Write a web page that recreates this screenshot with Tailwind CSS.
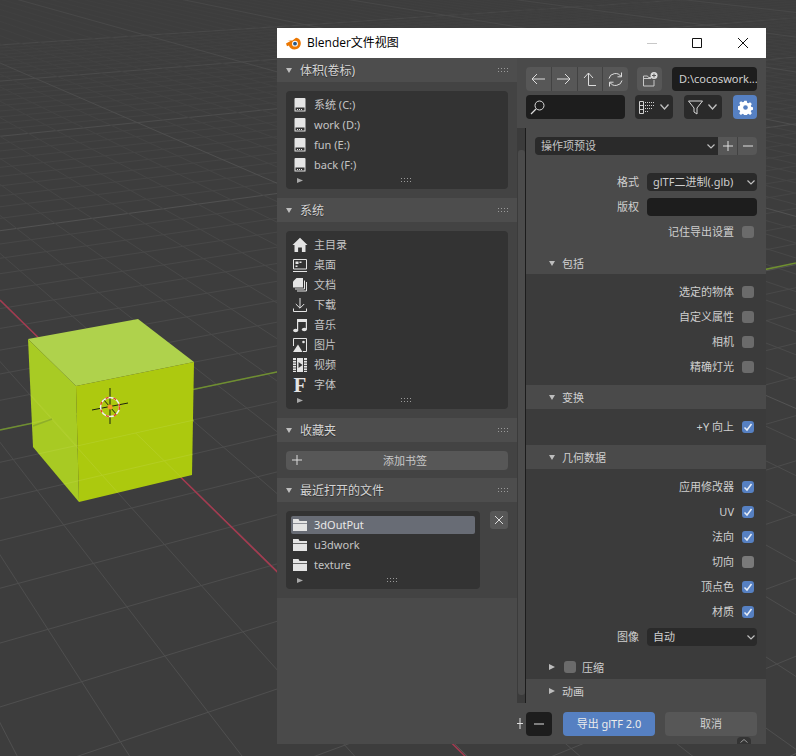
<!DOCTYPE html>
<html lang="zh">
<head>
<meta charset="UTF-8" />
<title>Blender文件视图</title>
<script src="https://cdn.jsdelivr.net/npm/@tailwindcss/browser@4"></script>
</head>
<body class="bg-[#3d3d3d] overflow-hidden font-['Noto_Sans','Noto_Sans_CJK_SC',sans-serif] text-[11px] leading-[18px] text-[#d0d0d0]">

<!-- icon symbols -->
<svg class="hidden">
  <symbol id="grip" viewBox="0 0 11 5"><g fill="#9a9a9a"><rect x="0" y="0" width="1" height="1"/><rect x="3" y="0" width="1" height="1"/><rect x="6" y="0" width="1" height="1"/><rect x="9" y="0" width="1" height="1"/><rect x="0" y="3" width="1" height="1"/><rect x="3" y="3" width="1" height="1"/><rect x="6" y="3" width="1" height="1"/><rect x="9" y="3" width="1" height="1"/></g></symbol>
  <symbol id="drive" viewBox="0 0 16 16"><path d="M3.500 1h9a1 1 0 0 1 1 1v12.500h-11V2a1 1 0 0 1 1-1z" fill="#e4e4e4"/><rect x="3.500" y="10.500" width="9" height="3" fill="#333"/><path d="M5 12h1v1H5zM7 12h1v1H7zM9 12h1v1H9z" fill="#e4e4e4"/></symbol>
  <symbol id="folder" viewBox="0 0 16 16"><path d="M1 2h5.500l1 2H15v2H1z" fill="#e4e4e4"/><path d="M1 6.700h14v7.300H1z" fill="#e4e4e4"/></symbol>
  <symbol id="home" viewBox="0 0 16 16"><path d="M8 .8 15.500 8H13.500v7h-3.600v-4.600H6.100V15H2.500V8H.5z" fill="#e4e4e4"/></symbol>
  <symbol id="desktop" viewBox="0 0 16 16"><path d="M1.500 2.500h13v9.500h-13z" fill="none" stroke="#e4e4e4"/><path d="M1 14h14v1H1z" fill="#e4e4e4"/><path d="M3.500 4.500h3v2.500h-3zM7.500 4.500h2v1.500h-2zM3.500 8.500h2v1.500h-2z" fill="#e4e4e4"/></symbol>
  <symbol id="docs" viewBox="0 0 16 16"><path d="M4.500 1H11v9.500H1V4.500z" fill="#e4e4e4"/><path d="M12.500 3.500v8.500H3M14.500 5v9H5" fill="none" stroke="#e4e4e4"/></symbol>
  <symbol id="download" viewBox="0 0 16 16"><path d="M8 1v10M3.800 7 8 11.200 12.200 7M1.500 11.500v3h13v-3" fill="none" stroke="#e4e4e4"/></symbol>
  <symbol id="music" viewBox="0 0 16 16"><path d="M5 2h10v10.500h-1.200V5H6.200v8.500H5z" fill="#e4e4e4"/><ellipse cx="3.600" cy="13.500" rx="2.500" ry="1.800" fill="#e4e4e4"/><ellipse cx="12.300" cy="12.500" rx="2.500" ry="1.800" fill="#e4e4e4"/></symbol>
  <symbol id="image" viewBox="0 0 16 16"><path d="M5 1.500h9.500v13H11M5 1.500H1.500V9" fill="none" stroke="#e4e4e4"/><path d="M1 15 6 7.500 10.500 15z" fill="#e4e4e4"/><circle cx="11.500" cy="5" r="1.300" fill="#e4e4e4"/></symbol>
  <symbol id="film" viewBox="0 0 16 16"><path d="M1 1h3v14H1zM12 1h3v14h-3z" fill="#e4e4e4"/><path d="M1 3.500h3M1 6h3M1 8.500h3M1 11h3M1 13.500h3M12 3.500h3M12 6h3M12 8.500h3M12 11h3M12 13.500h3" stroke="#333" stroke-width=".8"/><path d="M5 1h6v14H5z" fill="#e4e4e4"/><path d="M6.500 5v6L10.500 8z" fill="#333"/></symbol>
  <symbol id="check" viewBox="0 0 12 12"><path d="M2.500 6.500 5 9l4.500-6" fill="none" stroke="#e8eef8" stroke-width="1.500"/></symbol>
</svg>

<!-- 3D viewport -->
<svg id="viewport" class="absolute left-0 top-0" width="796" height="756" viewBox="0 0 796 756">
  <defs>
    <linearGradient id="fade" gradientUnits="userSpaceOnUse" x1="0" y1="0" x2="0" y2="756">
      <stop offset="0" stop-color="#3f3f3f"/>
      <stop offset=".2" stop-color="#444444"/>
      <stop offset=".45" stop-color="#4a4a4a"/>
      <stop offset="1" stop-color="#4f4f4f"/>
    </linearGradient>
    <linearGradient id="fade-major" gradientUnits="userSpaceOnUse" x1="0" y1="0" x2="0" y2="756">
      <stop offset="0" stop-color="#474747"/>
      <stop offset=".3" stop-color="#525252"/>
      <stop offset="1" stop-color="#565656"/>
    </linearGradient>
    <clipPath id="lower-cube"><path d="M31 395 77 446 194 420 192 475 79 502 33 447z"/></clipPath>
  </defs>
  <g id="grid" stroke="url(#fade)" stroke-width="1" fill="none"></g>
  <path d="M0 300 470 761" stroke="#a63a50" stroke-width="1.500"/>
  <path d="M0 430 796 263" stroke="#6f8f30" stroke-width="1.500"/>
  <path d="M28 339 138 319 194 362 76 386z" fill="#afd24c"/>
  <path d="M28 339 76 386 79 502 33 447z" fill="#a8cb24"/>
  <path d="M76 386 194 362 192 475 79 502z" fill="#adc90f"/>
  <g id="grid-over" clip-path="url(#lower-cube)" stroke="#c3d84f" stroke-width="1" fill="none" opacity=".3"></g>
  <path d="M31 395 77 446 194 420" stroke="#b6d12f" fill="none" opacity=".5"/>
  <path d="M33 426 52 419" stroke="#8fae2a" stroke-width="1.500"/>
  <!-- 3d cursor -->
  <path d="M110 388v36M92 410l36-7M103 399l14 16" stroke="#1d2410" stroke-width="1"/>
  <circle cx="110" cy="407" r="9.500" fill="none" stroke="#f2f2f2" stroke-width="1.500"/>
  <circle cx="110" cy="407" r="9.500" fill="none" stroke="#e0491f" stroke-width="1.500" stroke-dasharray="3 5"/>
  <circle cx="110" cy="407" r="2.500" fill="#f39a2b"/>
</svg>

<!-- file browser window -->
<div class="absolute left-[277px] top-[28px] w-[489px] h-[716px] flex flex-col bg-[#4a4a4a]">

  <!-- title bar -->
  <div class="h-[30px] bg-white flex items-center text-black shrink-0">
    <svg class="ml-[9px]" width="15" height="13" viewBox="0 0 15 13">
      <path d="M0 6.500 4.500 4 1.500 3.500h5L10 .8c3.500.6 4.800 3 4.800 5.500 0 3.500-2.800 6.200-6.300 6.200-3 0-5.200-1.700-5.500-4L1 9.200z" fill="#ea7600"/>
      <circle cx="9" cy="6.700" r="2.900" fill="#fff"/>
      <circle cx="9" cy="6.700" r="1.900" fill="#265787"/>
    </svg>
    <span class="ml-[6px] text-[12px] font-['Open_Sans','Noto_Sans_CJK_SC',sans-serif]">Blender文件视图</span>
    <div class="ml-auto flex h-full items-center">
      <svg class="mr-[35px]" width="10" height="10" viewBox="0 0 10 10"><path d="M0 5.500h10" stroke="#c8c8c8"/></svg>
      <svg class="mr-[36px]" width="10" height="10" viewBox="0 0 10 10"><path d="M.5.500h9v9h-9z" fill="none" stroke="#111"/></svg>
      <svg class="mr-[18px]" width="10" height="10" viewBox="0 0 10 10"><path d="M0 0l10 10M10 0 0 10" stroke="#111"/></svg>
    </div>
  </div>

  <div class="flex flex-1 min-h-0">
    <!-- sidebar -->
    <div class="w-[240px] shrink-0 flex flex-col bg-[#4a4a4a]">
      <div class="h-[24px] bg-[#4d4d4d] flex items-center pl-[9px] pr-[8px] text-[12px] text-[#d4d4d4] [text-shadow:0_1px_1px_rgba(0,0,0,.4)]">
        <svg width="6" height="5" viewBox="0 0 6 5"><path d="M0 0h6L3 5z" fill="#bdbdbd"/></svg>
        <span class="ml-[8px] mt-[2px]">体积(卷标)</span>
        <svg class="ml-auto" width="11" height="5"><use href="#grip"/></svg>
      </div>
      <div class="bg-[#434343] p-[9px]">
        <div class="bg-[#333333] rounded-[4px] h-[98px] pt-[4px] px-[6px] text-[#c4c4c4]">
          <div class="h-[20px] flex items-center gap-[6px]"><svg width="16" height="16"><use href="#drive"/></svg><span>系统 (C:)</span></div>
          <div class="h-[20px] flex items-center gap-[6px]"><svg width="16" height="16"><use href="#drive"/></svg><span>work (D:)</span></div>
          <div class="h-[20px] flex items-center gap-[6px]"><svg width="16" height="16"><use href="#drive"/></svg><span>fun (E:)</span></div>
          <div class="h-[20px] flex items-center gap-[6px]"><svg width="16" height="16"><use href="#drive"/></svg><span>back (F:)</span></div>
          <div class="h-[10px] flex items-center pl-[5px]">
            <svg width="6" height="5" viewBox="0 0 6 5"><path d="M0 0l6 2.500L0 5z" fill="#a8a8a8"/></svg>
            <svg class="ml-[98px]" width="11" height="5"><use href="#grip"/></svg>
          </div>
        </div>
      </div>

      <div class="h-[24px] bg-[#4d4d4d] flex items-center pl-[9px] pr-[8px] text-[12px] text-[#d4d4d4] [text-shadow:0_1px_1px_rgba(0,0,0,.4)]">
        <svg width="6" height="5" viewBox="0 0 6 5"><path d="M0 0h6L3 5z" fill="#bdbdbd"/></svg>
        <span class="ml-[8px] mt-[2px]">系统</span>
        <svg class="ml-auto" width="11" height="5"><use href="#grip"/></svg>
      </div>
      <div class="bg-[#434343] p-[9px]">
        <div class="bg-[#333333] rounded-[4px] h-[178px] pt-[4px] px-[6px] text-[#c4c4c4]">
          <div class="h-[20px] flex items-center gap-[6px]"><svg width="16" height="16"><use href="#home"/></svg><span>主目录</span></div>
          <div class="h-[20px] flex items-center gap-[6px]"><svg width="16" height="16"><use href="#desktop"/></svg><span>桌面</span></div>
          <div class="h-[20px] flex items-center gap-[6px]"><svg width="16" height="16"><use href="#docs"/></svg><span>文档</span></div>
          <div class="h-[20px] flex items-center gap-[6px]"><svg width="16" height="16"><use href="#download"/></svg><span>下载</span></div>
          <div class="h-[20px] flex items-center gap-[6px]"><svg width="16" height="16"><use href="#music"/></svg><span>音乐</span></div>
          <div class="h-[20px] flex items-center gap-[6px]"><svg width="16" height="16"><use href="#image"/></svg><span>图片</span></div>
          <div class="h-[20px] flex items-center gap-[6px]"><svg width="16" height="16"><use href="#film"/></svg><span>视频</span></div>
          <div class="h-[20px] flex items-center gap-[6px]"><span class="w-[16px] text-center text-[21px] font-bold leading-[20px] text-[#e4e4e4] font-['Liberation_Serif',serif]">F</span><span>字体</span></div>
          <div class="h-[10px] flex items-center pl-[5px]">
            <svg width="6" height="5" viewBox="0 0 6 5"><path d="M0 0l6 2.500L0 5z" fill="#a8a8a8"/></svg>
            <svg class="ml-[98px]" width="11" height="5"><use href="#grip"/></svg>
          </div>
        </div>
      </div>

      <div class="h-[24px] bg-[#4d4d4d] flex items-center pl-[9px] pr-[8px] text-[12px] text-[#d4d4d4] [text-shadow:0_1px_1px_rgba(0,0,0,.4)]">
        <svg width="6" height="5" viewBox="0 0 6 5"><path d="M0 0h6L3 5z" fill="#bdbdbd"/></svg>
        <span class="ml-[8px] mt-[2px]">收藏夹</span>
        <svg class="ml-auto" width="11" height="5"><use href="#grip"/></svg>
      </div>
      <div class="bg-[#434343] h-[36px] px-[9px] pt-[9px]">
        <div class="relative h-[19px] rounded-[4px] bg-[#575757] flex items-center justify-center pl-[16px] text-[#c8c8c8]">
          <svg class="absolute left-[6px] top-[4px]" width="10" height="10" viewBox="0 0 10 10"><path d="M0 5h10M5 0v10" stroke="#dcdcdc"/></svg>
          <span>添加书签</span>
        </div>
      </div>

      <div class="h-[24px] bg-[#4d4d4d] flex items-center pl-[9px] pr-[8px] text-[12px] text-[#d4d4d4] [text-shadow:0_1px_1px_rgba(0,0,0,.4)]">
        <svg width="6" height="5" viewBox="0 0 6 5"><path d="M0 0h6L3 5z" fill="#bdbdbd"/></svg>
        <span class="ml-[8px] mt-[2px]">最近打开的文件</span>
        <svg class="ml-auto" width="11" height="5"><use href="#grip"/></svg>
      </div>
      <div class="bg-[#434343] p-[9px] flex gap-[10px]">
        <div class="w-[194px] bg-[#333333] rounded-[4px] h-[78px] pt-[4px] px-[5px] text-[#c4c4c4]">
          <div class="h-[20px] flex items-center"><div class="h-[18px] w-full rounded-[2px] bg-[#686c75] flex items-center gap-[6px] pl-[1px] text-[#e8e8e8]"><svg width="16" height="16"><use href="#folder"/></svg><span>3dOutPut</span></div></div>
          <div class="h-[20px] flex items-center gap-[6px] pl-[1px]"><svg width="16" height="16"><use href="#folder"/></svg><span>u3dwork</span></div>
          <div class="h-[20px] flex items-center gap-[6px] pl-[1px]"><svg width="16" height="16"><use href="#folder"/></svg><span>texture</span></div>
          <div class="h-[10px] flex items-center pl-[6px]">
            <svg width="6" height="5" viewBox="0 0 6 5"><path d="M0 0l6 2.500L0 5z" fill="#a8a8a8"/></svg>
            <svg class="ml-[84px]" width="11" height="5"><use href="#grip"/></svg>
          </div>
        </div>
        <div class="w-[18px] h-[18px] rounded-[3px] bg-[#575757] flex items-center justify-center">
          <svg width="8" height="8" viewBox="0 0 8 8"><path d="M0 0l8 8M8 0 0 8" stroke="#dcdcdc"/></svg>
        </div>
      </div>
    </div>

    <!-- right side -->
    <div class="w-[249px] shrink-0 flex flex-col min-h-0">
      <!-- toolbar -->
      <div class="h-[70px] pl-[9px] pt-[9px] shrink-0 bg-[#4a4a4a]">
        <div class="flex h-[24px]">
          <div class="flex w-[102px] rounded-[4px] overflow-hidden bg-[#575757] divide-x divide-[#424242]">
            <div class="flex-1 flex items-center justify-center"><svg width="14" height="12" viewBox="0 0 14 12"><path d="M14 6H1M6 1 1 6l5 5" fill="none" stroke="#dcdcdc"/></svg></div>
            <div class="flex-1 flex items-center justify-center"><svg width="14" height="12" viewBox="0 0 14 12"><path d="M0 6h13M8 1l5 5-5 5" fill="none" stroke="#dcdcdc"/></svg></div>
            <div class="flex-1 flex items-center justify-center"><svg width="14" height="15" viewBox="0 0 14 15"><path d="M1 6l4.500-5L10 6M5.500 1v12.500H13" fill="none" stroke="#dcdcdc"/></svg></div>
            <div class="flex-1 flex items-center justify-center"><svg width="15" height="15" viewBox="0 0 15 15"><path d="M1 6.500A6.500 6 0 0 1 13 4.500M13.500 .5v4.300H9.500M14 8.500A6.500 6 0 0 1 2 10.500M1.500 14.500v-4.300h4" fill="none" stroke="#dcdcdc"/></svg></div>
          </div>
          <div class="ml-[9px] w-[25px] rounded-[4px] bg-[#575757] flex items-center justify-center">
            <svg width="16" height="15" viewBox="0 0 16 15"><path d="M1.500 4h4l1 1.500h3M1.500 4v10h10.500V8" fill="none" stroke="#c8c8c8"/><path d="M1 6h8v1H1z" fill="#c8c8c8"/><circle cx="12" cy="3.500" r="3.500" fill="#dcdcdc"/><path d="M12 1.500v4M10 3.500h4" stroke="#575757"/></svg>
          </div>
          <div class="ml-[10px] w-[85px] rounded-[4px] bg-[#1d1d1d] pl-[7px] leading-[24px] text-[#d0d0d0] whitespace-nowrap overflow-hidden">D:\cocoswork...</div>
        </div>
        <div class="flex h-[24px] mt-[4px]">
          <div class="w-[99px] rounded-[4px] bg-[#1d1d1d] flex items-center pl-[4px]">
            <svg width="15" height="15" viewBox="0 0 15 15"><circle cx="9.500" cy="5.500" r="4.500" fill="none" stroke="#dcdcdc"/><path d="M6 9 1 14" stroke="#dcdcdc" stroke-width="1.300"/></svg>
          </div>
          <div class="ml-[10px] w-[38px] rounded-[4px] bg-[#2a2a2a] flex items-center pl-[4px] gap-[6px]">
            <svg width="15" height="13" viewBox="0 0 15 13"><path d="M.5.500h4v12h-4zM.5 4.500h4M.5 8.500h4" fill="none" stroke="#d0d0d0"/><path d="M6 1h1v1H6zM8 1h1v1H8zM10 1h1v1h-1zM12 1h1v1h-1zM14 1h1v1h-1zM6 4h1v1H6zM8 4h1v1H8zM10 4h1v1h-1zM12 4h1v1h-1zM14 4h1v1h-1zM6 7h1v1H6zM8 7h1v1H8zM10 7h1v1h-1zM12 7h1v1h-1zM6 10h1v1H6zM8 10h1v1H8z" fill="#d0d0d0"/></svg>
            <svg width="9" height="6" viewBox="0 0 9 6"><path d="M.5.500 4.500 5 8.500.5" fill="none" stroke="#c0c0c0" stroke-width="1.300"/></svg>
          </div>
          <div class="ml-[11px] w-[38px] rounded-[4px] bg-[#2a2a2a] flex items-center pl-[4px] gap-[5px]">
            <svg width="15" height="15" viewBox="0 0 15 15"><path d="M.5 1h14L9 8v6L6 12V8z" fill="none" stroke="#d8d8d8"/></svg>
            <svg width="9" height="6" viewBox="0 0 9 6"><path d="M.5.500 4.500 5 8.500.5" fill="none" stroke="#c0c0c0" stroke-width="1.300"/></svg>
          </div>
          <div class="ml-[11px] w-[24px] rounded-[4px] bg-[#5680c2] flex items-center justify-center">
            <svg width="15" height="15" viewBox="0 0 15 15"><path d="M6.200.5h2.600l.4 2 1.300.6 1.800-1.100 1.800 1.800-1.100 1.800.6 1.300 2 .4v2.600l-2 .4-.6 1.300 1.100 1.800-1.800 1.800-1.800-1.100-1.300.6-.4 2H6.200l-.4-2-1.300-.6-1.800 1.100-1.800-1.800 1.100-1.800-.6-1.300-2-.4V6.200l2-.4.6-1.300L1 2.700l1.800-1.800 1.800 1.100 1.300-.6z" transform="translate(.3 .3) scale(.96)" fill="#fff"/><circle cx="7.500" cy="7.500" r="2.300" fill="#5680c2"/></svg>
          </div>
        </div>
      </div>

      <!-- scrollbar + options -->
      <div class="flex flex-1 min-h-0">
        <div class="relative w-[9px] shrink-0 bg-[#3b3b3b] border-r border-[#1c1c1c]">
          <div class="absolute left-[1px] right-0 top-[22px] bottom-[8px] rounded-[3px] bg-[#4b4b4b]"></div>
        </div>
        <div class="w-[240px] flex flex-col bg-[#4a4a4a]">
          <div class="px-[9px] pt-[9px] pb-[11px] text-[#cfcfcf]">
            <div class="flex h-[18px]">
              <div class="w-[183px] rounded-l-[4px] bg-[#2a2a2a] pl-[6px] flex items-center text-[#c4c4c4]">操作项预设
                <svg class="ml-auto mr-[3px]" width="8" height="5" viewBox="0 0 8 5"><path d="M.5.500 4 4 7.500.5" fill="none" stroke="#c0c0c0" stroke-width="1.200"/></svg>
              </div>
              <div class="w-[20px] bg-[#575757] flex items-center justify-center border-r border-[#424242]"><svg width="10" height="10" viewBox="0 0 10 10"><path d="M0 5h10M5 0v10" stroke="#e0e0e0"/></svg></div>
              <div class="w-[19px] rounded-r-[4px] bg-[#575757] flex items-center justify-center"><svg width="10" height="10" viewBox="0 0 10 10"><path d="M0 5h10" stroke="#e0e0e0"/></svg></div>
            </div>
            <div class="flex justify-end items-center h-[18px] mt-[18px]">
              <span class="mr-[8px]">格式</span>
              <div class="w-[110px] h-full rounded-[4px] bg-[#2a2a2a] pl-[6px] flex items-center">glTF二进制(.glb)
                <svg class="ml-auto mr-[2px]" width="8" height="5" viewBox="0 0 8 5"><path d="M.5.500 4 4 7.500.5" fill="none" stroke="#c0c0c0" stroke-width="1.200"/></svg>
              </div>
            </div>
            <div class="flex justify-end items-center h-[18px] mt-[7px]">
              <span class="mr-[8px]">版权</span>
              <div class="w-[110px] h-full rounded-[4px] bg-[#1d1d1d]"></div>
            </div>
            <div class="flex justify-end items-center h-[18px] mt-[7px] pr-[3px]">
              <span class="mr-[8px]">记住导出设置</span>
              <div class="w-[12px] h-[12px] rounded-[3px] bg-[#6b6b6b]"></div>
            </div>
          </div>

          <div class="h-[22px] flex items-center pl-[23px] text-[#d0d0d0]">
            <svg width="6" height="5" viewBox="0 0 6 5"><path d="M0 0h6L3 5z" fill="#bdbdbd"/></svg>
            <span class="ml-[7px] mt-[1px]">包括</span>
          </div>
          <div class="bg-[#3b3b3b] pt-[9px] pb-[9px] pr-[12px] flex flex-col gap-[7px] items-end text-[#cfcfcf]">
            <div class="flex items-center h-[18px]"><span class="mr-[8px]">选定的物体</span><div class="w-[12px] h-[12px] rounded-[3px] bg-[#6b6b6b]"></div></div>
            <div class="flex items-center h-[18px]"><span class="mr-[8px]">自定义属性</span><div class="w-[12px] h-[12px] rounded-[3px] bg-[#6b6b6b]"></div></div>
            <div class="flex items-center h-[18px]"><span class="mr-[8px]">相机</span><div class="w-[12px] h-[12px] rounded-[3px] bg-[#6b6b6b]"></div></div>
            <div class="flex items-center h-[18px]"><span class="mr-[8px]">精确灯光</span><div class="w-[12px] h-[12px] rounded-[3px] bg-[#6b6b6b]"></div></div>
          </div>

          <div class="h-[24px] flex items-center pl-[23px] text-[#d0d0d0]">
            <svg width="6" height="5" viewBox="0 0 6 5"><path d="M0 0h6L3 5z" fill="#bdbdbd"/></svg>
            <span class="ml-[7px] mt-[1px]">变换</span>
          </div>
          <div class="bg-[#3b3b3b] pt-[9px] pb-[9px] pr-[12px] flex flex-col items-end text-[#cfcfcf]">
            <div class="flex items-center h-[18px]"><span class="mr-[8px]">+Y 向上</span><div class="w-[12px] h-[12px] rounded-[3px] bg-[#5680c2]"><svg width="12" height="12"><use href="#check"/></svg></div></div>
          </div>

          <div class="h-[24px] flex items-center pl-[23px] text-[#d0d0d0]">
            <svg width="6" height="5" viewBox="0 0 6 5"><path d="M0 0h6L3 5z" fill="#bdbdbd"/></svg>
            <span class="ml-[7px] mt-[2px]">几何数据</span>
          </div>
          <div class="bg-[#3b3b3b] pt-[9px] text-[#cfcfcf]">
            <div class="pr-[12px] flex flex-col gap-[7px] items-end">
              <div class="flex items-center h-[18px]"><span class="mr-[8px]">应用修改器</span><div class="w-[12px] h-[12px] rounded-[3px] bg-[#5680c2]"><svg width="12" height="12"><use href="#check"/></svg></div></div>
              <div class="flex items-center h-[18px]"><span class="mr-[8px]">UV</span><div class="w-[12px] h-[12px] rounded-[3px] bg-[#5680c2]"><svg width="12" height="12"><use href="#check"/></svg></div></div>
              <div class="flex items-center h-[18px]"><span class="mr-[8px]">法向</span><div class="w-[12px] h-[12px] rounded-[3px] bg-[#5680c2]"><svg width="12" height="12"><use href="#check"/></svg></div></div>
              <div class="flex items-center h-[18px]"><span class="mr-[8px]">切向</span><div class="w-[12px] h-[12px] rounded-[3px] bg-[#7a7a7a]"></div></div>
              <div class="flex items-center h-[18px]"><span class="mr-[8px]">顶点色</span><div class="w-[12px] h-[12px] rounded-[3px] bg-[#5680c2]"><svg width="12" height="12"><use href="#check"/></svg></div></div>
              <div class="flex items-center h-[18px]"><span class="mr-[8px]">材质</span><div class="w-[12px] h-[12px] rounded-[3px] bg-[#5680c2]"><svg width="12" height="12"><use href="#check"/></svg></div></div>
            </div>
            <div class="flex justify-end items-center h-[18px] mt-[7px] pr-[9px]">
              <span class="mr-[8px]">图像</span>
              <div class="w-[110px] h-full rounded-[4px] bg-[#2a2a2a] pl-[6px] flex items-center">自动
                <svg class="ml-auto mr-[2px]" width="8" height="5" viewBox="0 0 8 5"><path d="M.5.500 4 4 7.500.5" fill="none" stroke="#c0c0c0" stroke-width="1.200"/></svg>
              </div>
            </div>
            <div class="h-[24px] mt-[9px] flex items-center pl-[23px]">
              <svg width="6" height="6" viewBox="0 0 6 6"><path d="M0 0l6 3-6 3z" fill="#bdbdbd"/></svg>
              <div class="ml-[9px] w-[12px] h-[12px] rounded-[3px] bg-[#6b6b6b]"></div>
              <span class="ml-[6px] mt-[1px]">压缩</span>
            </div>
          </div>
          <div class="h-[24px] flex items-center pl-[23px] text-[#d0d0d0]">
            <svg width="6" height="6" viewBox="0 0 6 6"><path d="M0 0l6 3-6 3z" fill="#bdbdbd"/></svg>
            <span class="ml-[7px] mt-[1px]">动画</span>
          </div>
        </div>
      </div>

      <!-- footer -->
      <div class="relative h-[41px] shrink-0 bg-[#4a4a4a] pt-[9px] flex">
        <svg class="absolute left-0 top-[15px]" width="6" height="11" viewBox="0 0 6 11"><path d="M0 5.500h6M3 0v11" stroke="#e0e0e0"/></svg>
        <div class="ml-[9px] w-[26px] h-[24px] rounded-[4px] bg-[#1d1d1d] flex items-center justify-center"><svg width="10" height="10" viewBox="0 0 10 10"><path d="M0 5h10" stroke="#e0e0e0"/></svg></div>
        <div class="ml-[11px] w-[92px] h-[24px] rounded-[4px] bg-[#5680c2] flex items-center justify-center text-[#ececec]">导出 glTF 2.0</div>
        <div class="ml-[10px] w-[92px] h-[24px] rounded-[4px] bg-[#575757] flex items-center justify-center text-[#d0d0d0]">取消</div>
        <div class="absolute right-[15px] bottom-0 w-[14px] h-[7px] rounded-t-[4px] bg-[#343434] flex items-center justify-center"><svg width="8" height="4" viewBox="0 0 8 4"><path d="M.5 3.500 4 .5l3.500 3" fill="none" stroke="#9a9a9a"/></svg></div>
      </div>
    </div>
  </div>
</div>

<script>
  // ground grid in perspective, from the two vanishing points of the axes
  const O = [109, 407], VA = [-440, -128], VB = [2723, -135];
  const alpha = 0.0457, beta = 0.0215;
  function project(u, v) {
    const a = u * alpha, b = v * beta, w = 1 + a + b;
    return [(O[0] + a * VA[0] + b * VB[0]) / w, (O[1] + a * VA[1] + b * VB[1]) / w];
  }
  function addLine(group, p, q, major) {
    const l = document.createElementNS("http://www.w3.org/2000/svg", "line");
    l.setAttribute("x1", p[0]); l.setAttribute("y1", p[1]);
    l.setAttribute("x2", q[0]); l.setAttribute("y2", q[1]);
    if (major) l.setAttribute("stroke", "url(#fade-major)");
    group.appendChild(l);
  }
  const grid = document.getElementById("grid"), over = document.getElementById("grid-over");
  for (let u = -21; u <= 40; u++) {
    const vMin = -(1 + u * alpha) / beta * 0.97;
    const p = project(u, vMin), q = project(u, 400);
    addLine(grid, p, q, u % 10 === 0); addLine(over, p, q);
  }
  for (let v = -45; v <= 60; v++) {
    const uMin = -(1 + v * beta) / alpha * 0.97;
    const p = project(uMin, v), q = project(200, v);
    addLine(grid, p, q, v % 10 === 0); addLine(over, p, q);
  }
</script>
</body>
</html>
